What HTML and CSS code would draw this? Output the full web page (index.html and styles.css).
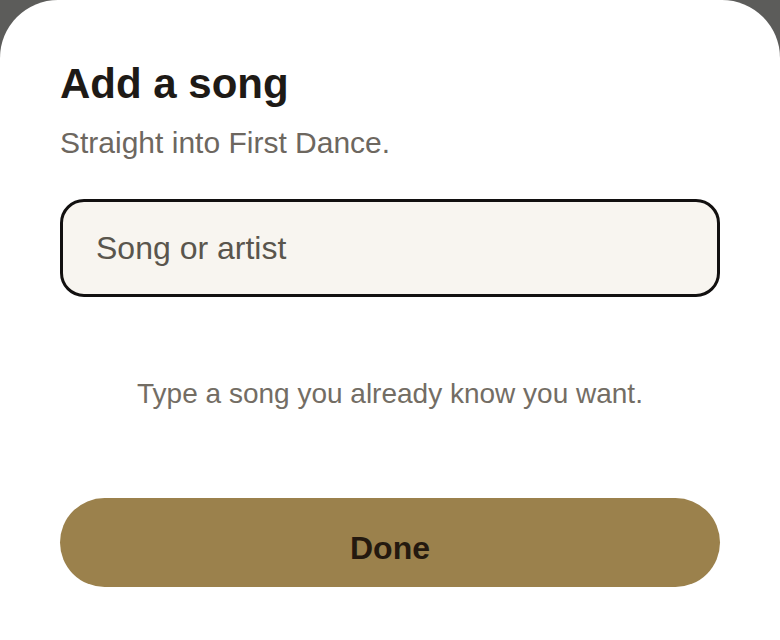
FILE: index.html
```html
<!DOCTYPE html>
<html lang="en">
<head>
<meta charset="utf-8">
<title>Add a song</title>
<link rel="stylesheet" href="styles.css">
</head>
<body>
<div class="sheet">
  <h1 class="title">Add a song</h1>
  <p class="subtitle">Straight into First Dance.</p>
  <input class="search" type="text" placeholder="Song or artist">
  <p class="hint">Type a song you already know you want.</p>
  <button class="done" type="button">Done</button>
</div>
</body>
</html>
```
FILE: styles.css
```css
html, body {
  margin: 0;
  padding: 0;
  height: 100%;
}
body {
  background: #5c5c5a;
  font-family: "Liberation Sans", Arial, sans-serif;
  overflow: hidden;
}
.sheet {
  box-sizing: border-box;
  height: 640px;
  background: #ffffff;
  border-radius: 58px 58px 0 0;
  padding: 59px 60px 0;
  display: flex;
  flex-direction: column;
}
.title {
  margin: 0;
  font-size: 42px;
  line-height: 50px;
  font-weight: 700;
  color: #1e1a16;
}
.subtitle {
  margin: 14px 0 0;
  font-size: 30px;
  line-height: 39px;
  color: #6d675f;
}
.search {
  box-sizing: border-box;
  margin: 37px 0 0;
  width: 100%;
  height: 98px;
  border: 3px solid #121010;
  border-radius: 24px;
  background: #f8f5f0;
  padding: 0 33px;
  font-family: "Liberation Sans", Arial, sans-serif;
  font-size: 32px;
  color: #2a2520;
  outline: none;
}
.search::placeholder {
  color: #5a554d;
  opacity: 1;
}
.hint {
  margin: 77px 0 0;
  text-align: center;
  font-size: 28px;
  line-height: 39px;
  color: #736d64;
}
.done {
  box-sizing: border-box;
  margin: 85px 0 0;
  height: 89px;
  width: 100%;
  border: none;
  border-radius: 45px;
  background: #9b814c;
  padding: 12px 0 0;
  font-family: "Liberation Sans", Arial, sans-serif;
  font-size: 32px;
  font-weight: 700;
  color: #24190f;
  cursor: pointer;
}
```
